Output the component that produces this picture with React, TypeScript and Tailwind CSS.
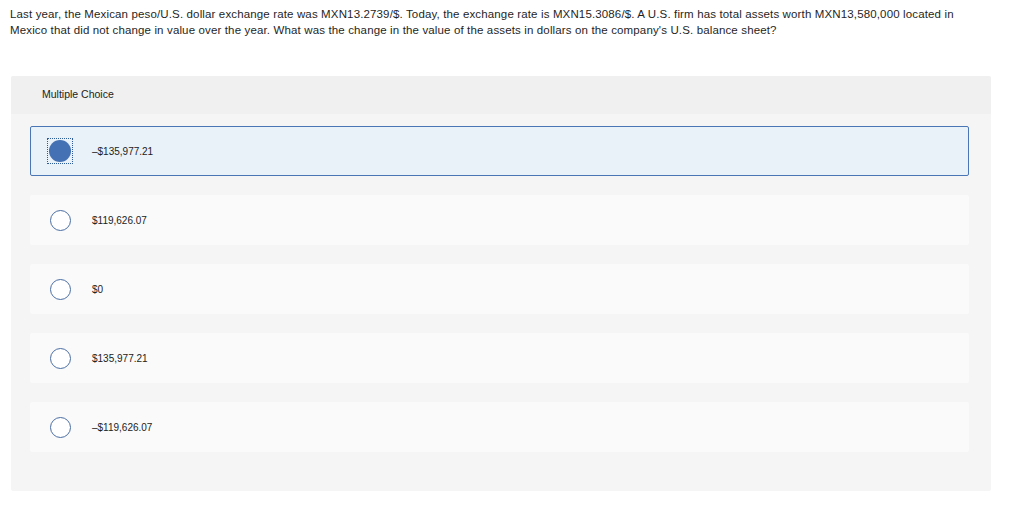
import React from 'react';

const options = [
  { id: 'a', label: '–$135,977.21', checked: true },
  { id: 'b', label: '$119,626.07', checked: false },
  { id: 'c', label: '$0', checked: false },
  { id: 'd', label: '$135,977.21', checked: false },
  { id: 'e', label: '–$119,626.07', checked: false },
];

const Radio: React.FC<{ checked: boolean }> = ({ checked }) =>
  checked ? (
    <div className="w-[24px] h-[24px] flex items-center justify-center outline outline-1 outline-dotted outline-[#2f5a9a]">
      <div className="w-[22px] h-[22px] rounded-full bg-[#4471b3]" />
    </div>
  ) : (
    <div className="w-[21px] h-[21px] rounded-full border border-[#4a6ea3] bg-white" />
  );

export default function App() {
  return (
    <div className="w-[1024px] h-[509px] bg-white text-[#222] font-['Liberation_Sans','Arial',sans-serif]">
      <p className="pl-[10px] pt-[6px] w-[975px] text-[11.5px] tracking-[0.14px] leading-[16px] text-[#1f1f1f]">
        Last year, the Mexican peso/U.S. dollar exchange rate was MXN13.2739/$. Today, the exchange rate is MXN15.3086/$. A U.S. firm has total assets worth MXN13,580,000 located in Mexico that did not change in value over the year. What was the change in the value of the assets in dollars on the company's U.S. balance sheet?
      </p>

      <div className="ml-[11px] mt-[38px] w-[980px] h-[415px] bg-[#f5f5f5] rounded-[2px] overflow-hidden">
        <div className="h-[38px] bg-[#f0f0f0] pl-[31px] flex items-center text-[10.5px] text-[#222]">
          Multiple Choice
        </div>
        <div className="pl-[19px] pr-[22px] pt-[12px] flex flex-col gap-[19px]">
          {options.map((o) => (
            <div
              key={o.id}
              className={`h-[50px] flex items-center rounded-[2px] ${
                o.checked ? 'bg-[#e9f1f9] border border-[#4a76b5] pl-[17px]' : 'bg-[#fafafa] pl-[18px]'
              }`}
            >
              <div className="w-[24px] flex items-center justify-center">
                <Radio checked={o.checked} />
              </div>
              <span className="ml-[20px] text-[10px] text-[#222]">{o.label}</span>
            </div>
          ))}
        </div>
      </div>
    </div>
  );
}
